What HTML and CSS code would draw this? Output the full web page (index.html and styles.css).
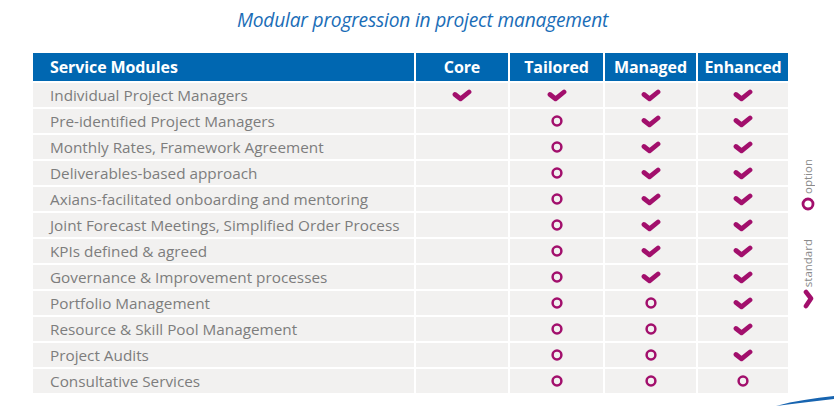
FILE: index.html
```html
<!DOCTYPE html>
<html lang="en">
<head>
<meta charset="utf-8">
<title>Modular progression in project management</title>
<link rel="stylesheet" href="styles.css">
</head>
<body>
<div class="slide">
  <h1 class="title">Modular progression in project management</h1>
  <div class="content">
    <div class="table">
      <div class="th first">Service Modules</div>
      <div class="th">Core</div>
      <div class="th">Tailored</div>
      <div class="th">Managed</div>
      <div class="th">Enhanced</div>

      <div class="td first">Individual Project Managers</div>
      <div class="td"><svg class="chk" viewBox="0 0 20 13"><polyline points="3,5.5 8.5,9.8 17,3"/></svg></div>
      <div class="td"><svg class="chk" viewBox="0 0 20 13"><polyline points="3,5.5 8.5,9.8 17,3"/></svg></div>
      <div class="td"><svg class="chk" viewBox="0 0 20 13"><polyline points="3,5.5 8.5,9.8 17,3"/></svg></div>
      <div class="td"><svg class="chk" viewBox="0 0 20 13"><polyline points="3,5.5 8.5,9.8 17,3"/></svg></div>

      <div class="td first">Pre-identified Project Managers</div>
      <div class="td"></div>
      <div class="td"><svg class="opt" viewBox="0 0 12 12"><circle cx="6" cy="6" r="4.4"/></svg></div>
      <div class="td"><svg class="chk" viewBox="0 0 20 13"><polyline points="3,5.5 8.5,9.8 17,3"/></svg></div>
      <div class="td"><svg class="chk" viewBox="0 0 20 13"><polyline points="3,5.5 8.5,9.8 17,3"/></svg></div>

      <div class="td first">Monthly Rates, Framework Agreement</div>
      <div class="td"></div>
      <div class="td"><svg class="opt" viewBox="0 0 12 12"><circle cx="6" cy="6" r="4.4"/></svg></div>
      <div class="td"><svg class="chk" viewBox="0 0 20 13"><polyline points="3,5.5 8.5,9.8 17,3"/></svg></div>
      <div class="td"><svg class="chk" viewBox="0 0 20 13"><polyline points="3,5.5 8.5,9.8 17,3"/></svg></div>

      <div class="td first">Deliverables-based approach</div>
      <div class="td"></div>
      <div class="td"><svg class="opt" viewBox="0 0 12 12"><circle cx="6" cy="6" r="4.4"/></svg></div>
      <div class="td"><svg class="chk" viewBox="0 0 20 13"><polyline points="3,5.5 8.5,9.8 17,3"/></svg></div>
      <div class="td"><svg class="chk" viewBox="0 0 20 13"><polyline points="3,5.5 8.5,9.8 17,3"/></svg></div>

      <div class="td first">Axians-facilitated onboarding and mentoring</div>
      <div class="td"></div>
      <div class="td"><svg class="opt" viewBox="0 0 12 12"><circle cx="6" cy="6" r="4.4"/></svg></div>
      <div class="td"><svg class="chk" viewBox="0 0 20 13"><polyline points="3,5.5 8.5,9.8 17,3"/></svg></div>
      <div class="td"><svg class="chk" viewBox="0 0 20 13"><polyline points="3,5.5 8.5,9.8 17,3"/></svg></div>

      <div class="td first">Joint Forecast Meetings, Simplified Order Process</div>
      <div class="td"></div>
      <div class="td"><svg class="opt" viewBox="0 0 12 12"><circle cx="6" cy="6" r="4.4"/></svg></div>
      <div class="td"><svg class="chk" viewBox="0 0 20 13"><polyline points="3,5.5 8.5,9.8 17,3"/></svg></div>
      <div class="td"><svg class="chk" viewBox="0 0 20 13"><polyline points="3,5.5 8.5,9.8 17,3"/></svg></div>

      <div class="td first">KPIs defined &amp; agreed</div>
      <div class="td"></div>
      <div class="td"><svg class="opt" viewBox="0 0 12 12"><circle cx="6" cy="6" r="4.4"/></svg></div>
      <div class="td"><svg class="chk" viewBox="0 0 20 13"><polyline points="3,5.5 8.5,9.8 17,3"/></svg></div>
      <div class="td"><svg class="chk" viewBox="0 0 20 13"><polyline points="3,5.5 8.5,9.8 17,3"/></svg></div>

      <div class="td first">Governance &amp; Improvement processes</div>
      <div class="td"></div>
      <div class="td"><svg class="opt" viewBox="0 0 12 12"><circle cx="6" cy="6" r="4.4"/></svg></div>
      <div class="td"><svg class="chk" viewBox="0 0 20 13"><polyline points="3,5.5 8.5,9.8 17,3"/></svg></div>
      <div class="td"><svg class="chk" viewBox="0 0 20 13"><polyline points="3,5.5 8.5,9.8 17,3"/></svg></div>

      <div class="td first">Portfolio Management</div>
      <div class="td"></div>
      <div class="td"><svg class="opt" viewBox="0 0 12 12"><circle cx="6" cy="6" r="4.4"/></svg></div>
      <div class="td"><svg class="opt" viewBox="0 0 12 12"><circle cx="6" cy="6" r="4.4"/></svg></div>
      <div class="td"><svg class="chk" viewBox="0 0 20 13"><polyline points="3,5.5 8.5,9.8 17,3"/></svg></div>

      <div class="td first">Resource &amp; Skill Pool Management</div>
      <div class="td"></div>
      <div class="td"><svg class="opt" viewBox="0 0 12 12"><circle cx="6" cy="6" r="4.4"/></svg></div>
      <div class="td"><svg class="opt" viewBox="0 0 12 12"><circle cx="6" cy="6" r="4.4"/></svg></div>
      <div class="td"><svg class="chk" viewBox="0 0 20 13"><polyline points="3,5.5 8.5,9.8 17,3"/></svg></div>

      <div class="td first">Project Audits</div>
      <div class="td"></div>
      <div class="td"><svg class="opt" viewBox="0 0 12 12"><circle cx="6" cy="6" r="4.4"/></svg></div>
      <div class="td"><svg class="opt" viewBox="0 0 12 12"><circle cx="6" cy="6" r="4.4"/></svg></div>
      <div class="td"><svg class="chk" viewBox="0 0 20 13"><polyline points="3,5.5 8.5,9.8 17,3"/></svg></div>

      <div class="td first">Consultative Services</div>
      <div class="td"></div>
      <div class="td"><svg class="opt" viewBox="0 0 12 12"><circle cx="6" cy="6" r="4.4"/></svg></div>
      <div class="td"><svg class="opt" viewBox="0 0 12 12"><circle cx="6" cy="6" r="4.4"/></svg></div>
      <div class="td"><svg class="opt" viewBox="0 0 12 12"><circle cx="6" cy="6" r="4.4"/></svg></div>
    </div>

    <div class="legend">
      <span class="legend-text">option</span>
      <svg class="legend-opt" viewBox="0 0 14 14"><circle cx="7" cy="7" r="5"/></svg>
      <span class="legend-text second">standard</span>
      <svg class="legend-chk" viewBox="0 0 13 20"><polyline points="4,3 9,9.5 4,17"/></svg>
    </div>
  </div>
  <svg class="swoosh" viewBox="0 0 60 14"><path d="M2 13 C 20 8, 40 5, 60 3 L 60 6 C 40 8, 20 11, 2 13 Z"/></svg>
</div>
</body>
</html>
```

FILE: styles.css
```css
html, body {
  margin: 0;
  padding: 0;
  background: #ffffff;
}

.slide {
  position: relative;
  width: 834px;
  height: 407px;
  overflow: hidden;
  font-family: "Open Sans", "Noto Sans", sans-serif;
}

.title {
  margin: 0;
  height: 53px;
  padding-top: 6px;
  box-sizing: border-box;
  text-align: center;
  padding-left: 11px;
  font-size: 19.2px;
  line-height: 28px;
  font-weight: 400;
  font-style: italic;
  color: #1a6db7;
  letter-spacing: -0.2px;
}

.content {
  display: flex;
  align-items: flex-start;
  padding-left: 33px;
}

.table {
  display: grid;
  grid-template-columns: 381px 92px 93px 91px 90px;
  grid-auto-rows: 24px;
  grid-template-rows: 28px;
  column-gap: 2px;
  row-gap: 2px;
}

.th {
  background: #0067b1;
  color: #ffffff;
  font-weight: 700;
  font-size: 16px;
  letter-spacing: -0.1px;
  display: flex;
  align-items: center;
  justify-content: center;
}

.th.first {
  justify-content: flex-start;
  padding-left: 17px;
}

.td {
  background: #f2f1f0;
  display: flex;
  align-items: center;
  justify-content: center;
}

.td.first {
  justify-content: flex-start;
  padding-left: 17px;
  color: #7d7d7d;
  font-size: 15.3px;
  letter-spacing: 0;
}

.chk {
  width: 20px;
  height: 13px;
  fill: none;
  stroke: #a20f6c;
  stroke-width: 4.8;
  stroke-linecap: round;
  stroke-linejoin: round;
}

.opt {
  width: 12px;
  height: 12px;
  fill: none;
  stroke: #a20f6c;
  stroke-width: 2.5;
}

.legend {
  display: flex;
  flex-direction: column;
  align-items: center;
  margin-top: 106px;
  margin-left: 13px;
  width: 14px;
}

.legend-text {
  writing-mode: vertical-rl;
  transform: rotate(180deg);
  font-size: 11.5px;
  line-height: 14px;
  color: #8a8a8a;
}

.legend-text.second {
  margin-top: 28px;
}

.legend-opt {
  margin-top: 3px;
  width: 14px;
  height: 14px;
  fill: none;
  stroke: #a20f6c;
  stroke-width: 2.8;
}

.legend-chk {
  margin-top: 2px;
  width: 13px;
  height: 20px;
  fill: none;
  stroke: #a20f6c;
  stroke-width: 4.6;
  stroke-linecap: round;
  stroke-linejoin: round;
}

.swoosh {
  position: absolute;
  right: 0;
  bottom: 0;
  width: 60px;
  height: 14px;
  fill: #1764b0;
}
```
